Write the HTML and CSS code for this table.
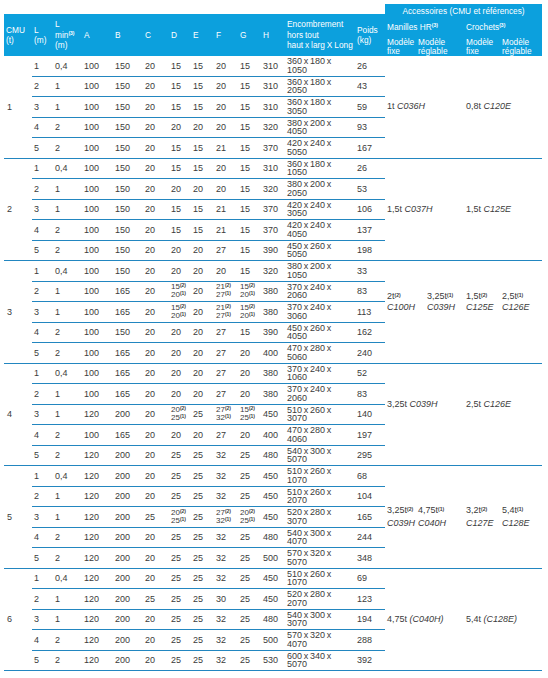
FILE: index.html
```html
<!DOCTYPE html>
<html lang="fr">
<head>
<meta charset="utf-8">
<title>Tableau</title>
<link rel="stylesheet" href="styles.css">
</head>
<body>
<table class="t">
<colgroup>
<col class="c28"><col class="c21"><col class="c29"><col class="c31"><col class="c30"><col class="c26"><col class="c22"><col class="c23"><col class="c24"><col class="c23"><col class="c24"><col class="c70"><col class="c30"><col class="c31"><col class="c48"><col class="c36"><col class="c42">
</colgroup>
<thead>
<tr class="h1">
<th class="hl" rowspan="3">CMU<br>(t)</th>
<th class="hl" rowspan="3">L<br>(m)</th>
<th class="hl" rowspan="3">L<br>min<sup class="s">(3)</sup><br>(m)</th>
<th class="hl" rowspan="3">A</th>
<th class="hl" rowspan="3">B</th>
<th class="hl" rowspan="3">C</th>
<th class="hl" rowspan="3">D</th>
<th class="hl" rowspan="3">E</th>
<th class="hl" rowspan="3">F</th>
<th class="hl" rowspan="3">G</th>
<th class="hl" rowspan="3">H</th>
<th class="hl nw" rowspan="3">Encombrement<br>hors tout<br>haut x larg X Long</th>
<th class="hl" rowspan="3">Poids<br>(kg)</th>
<th class="ha" colspan="4">Accessoires (CMU et références)</th>
</tr>
<tr class="h2">
<th class="hs" colspan="2">Manilles HR<sup class="s">(3)</sup></th>
<th class="hs" colspan="2">Crochets<sup class="s">(3)</sup></th>
</tr>
<tr class="h3">
<th class="hm">Modèle fixe</th>
<th class="hm">Modèle réglable</th>
<th class="hm">Modèle fixe</th>
<th class="hm">Modèle réglable</th>
</tr>
</thead>
<tbody>
<!-- group 1 -->
<tr><td class="cmu" rowspan="5">1</td><td>1</td><td>0,4</td><td>100</td><td>150</td><td>20</td><td>15</td><td>15</td><td>20</td><td>15</td><td>310</td><td class="dim">360 x 180 x<br>1050</td><td>26</td>
<td class="acc" rowspan="5" colspan="2">1t <i>C036H</i></td><td class="acc" rowspan="5" colspan="2">0,8t <i>C120E</i></td></tr>
<tr><td>2</td><td>1</td><td>100</td><td>150</td><td>20</td><td>15</td><td>15</td><td>20</td><td>15</td><td>310</td><td class="dim">360 x 180 x<br>2050</td><td>43</td></tr>
<tr><td>3</td><td>1</td><td>100</td><td>150</td><td>20</td><td>15</td><td>15</td><td>20</td><td>15</td><td>310</td><td class="dim">360 x 180 x<br>3050</td><td>59</td></tr>
<tr><td>4</td><td>2</td><td>100</td><td>150</td><td>20</td><td>20</td><td>20</td><td>20</td><td>15</td><td>320</td><td class="dim">380 x 200 x<br>4050</td><td>93</td></tr>
<tr><td>5</td><td>2</td><td>100</td><td>150</td><td>20</td><td>15</td><td>15</td><td>21</td><td>15</td><td>370</td><td class="dim">420 x 240 x<br>5050</td><td>167</td></tr>
<!-- group 2 -->
<tr><td class="cmu" rowspan="5">2</td><td>1</td><td>0,4</td><td>100</td><td>150</td><td>20</td><td>15</td><td>15</td><td>20</td><td>15</td><td>310</td><td class="dim">360 x 180 x<br>1050</td><td>26</td>
<td class="acc" rowspan="5" colspan="2">1,5t <i>C037H</i></td><td class="acc" rowspan="5" colspan="2">1,5t <i>C125E</i></td></tr>
<tr><td>2</td><td>1</td><td>100</td><td>150</td><td>20</td><td>20</td><td>20</td><td>20</td><td>15</td><td>320</td><td class="dim">380 x 200 x<br>2050</td><td>53</td></tr>
<tr><td>3</td><td>1</td><td>100</td><td>150</td><td>20</td><td>15</td><td>15</td><td>21</td><td>15</td><td>370</td><td class="dim">420 x 240 x<br>3050</td><td>106</td></tr>
<tr><td>4</td><td>2</td><td>100</td><td>150</td><td>20</td><td>15</td><td>15</td><td>21</td><td>15</td><td>370</td><td class="dim">420 x 240 x<br>4050</td><td>137</td></tr>
<tr><td>5</td><td>2</td><td>100</td><td>150</td><td>20</td><td>20</td><td>20</td><td>27</td><td>15</td><td>390</td><td class="dim">450 x 260 x<br>5050</td><td>198</td></tr>
<!-- group 3 -->
<tr><td class="cmu" rowspan="5">3</td><td>1</td><td>0,4</td><td>100</td><td>150</td><td>20</td><td>20</td><td>20</td><td>20</td><td>15</td><td>320</td><td class="dim">380 x 200 x<br>1050</td><td>33</td>
<td class="acc a3 nb" rowspan="4">2t<sup class="s">(2)</sup><br><i>C100H</i></td><td class="acc a3 nb pad" rowspan="4">3,25t<sup class="s">(1)</sup><br><i>C039H</i></td><td class="acc a3 nb" rowspan="4">1,5t<sup class="s">(2)</sup><br><i>C125E</i></td><td class="acc a3 nb" rowspan="4">2,5t<sup class="s">(1)</sup><br><i>C126E</i></td></tr>
<tr><td>2</td><td>1</td><td>100</td><td>165</td><td>20</td><td class="two">15<sup class="s">(2)</sup><br>20<sup class="s">(1)</sup></td><td>20</td><td class="two">21<sup class="s">(2)</sup><br>27<sup class="s">(1)</sup></td><td class="two">15<sup class="s">(2)</sup><br>20<sup class="s">(1)</sup></td><td>380</td><td class="dim">370 x 240 x<br>2060</td><td>83</td></tr>
<tr><td>3</td><td>1</td><td>100</td><td>165</td><td>20</td><td class="two">15<sup class="s">(2)</sup><br>20<sup class="s">(1)</sup></td><td>20</td><td class="two">21<sup class="s">(2)</sup><br>27<sup class="s">(1)</sup></td><td class="two">15<sup class="s">(2)</sup><br>20<sup class="s">(1)</sup></td><td>380</td><td class="dim">370 x 240 x<br>3060</td><td>113</td></tr>
<tr><td>4</td><td>2</td><td>100</td><td>150</td><td>20</td><td>20</td><td>20</td><td>27</td><td>15</td><td>390</td><td class="dim">450 x 260 x<br>4050</td><td>162</td></tr>
<tr><td>5</td><td>2</td><td>100</td><td>165</td><td>20</td><td>20</td><td>20</td><td>27</td><td>20</td><td>400</td><td class="dim">470 x 280 x<br>5060</td><td>240</td><td colspan="4"></td></tr>
<!-- group 4 -->
<tr><td class="cmu" rowspan="5">4</td><td>1</td><td>0,4</td><td>100</td><td>165</td><td>20</td><td>20</td><td>20</td><td>27</td><td>20</td><td>380</td><td class="dim">370 x 240 x<br>1060</td><td>52</td>
<td class="acc nb" rowspan="4" colspan="2">3,25t <i>C039H</i></td><td class="acc nb" rowspan="4" colspan="2">2,5t <i>C126E</i></td></tr>
<tr><td>2</td><td>1</td><td>100</td><td>165</td><td>20</td><td>20</td><td>20</td><td>27</td><td>20</td><td>380</td><td class="dim">370 x 240 x<br>2060</td><td>83</td></tr>
<tr><td>3</td><td>1</td><td>120</td><td>200</td><td>20</td><td class="two">20<sup class="s">(2)</sup><br>25<sup class="s">(1)</sup></td><td>25</td><td class="two">27<sup class="s">(2)</sup><br>32<sup class="s">(1)</sup></td><td class="two">15<sup class="s">(2)</sup><br>25<sup class="s">(1)</sup></td><td>450</td><td class="dim">510 x 260 x<br>3070</td><td>140</td></tr>
<tr><td>4</td><td>2</td><td>100</td><td>165</td><td>20</td><td>20</td><td>20</td><td>27</td><td>20</td><td>400</td><td class="dim">470 x 280 x<br>4060</td><td>197</td></tr>
<tr><td>5</td><td>2</td><td>120</td><td>200</td><td>20</td><td>25</td><td>25</td><td>32</td><td>25</td><td>480</td><td class="dim">540 x 300 x<br>5070</td><td>295</td><td colspan="4"></td></tr>
<!-- group 5 -->
<tr><td class="cmu" rowspan="5">5</td><td>1</td><td>0,4</td><td>120</td><td>200</td><td>20</td><td>25</td><td>25</td><td>32</td><td>25</td><td>450</td><td class="dim">510 x 260 x<br>1070</td><td>68</td>
<td class="acc a5" rowspan="5">3,25t<sup class="s">(2)</sup><br><i>C039H</i></td><td class="acc a5" rowspan="5">4,75t<sup class="s">(1)</sup><br><i>C040H</i></td><td class="acc a5" rowspan="5">3,2t<sup class="s">(2)</sup><br><i>C127E</i></td><td class="acc a5" rowspan="5">5,4t<sup class="s">(1)</sup><br><i>C128E</i></td></tr>
<tr><td>2</td><td>1</td><td>120</td><td>200</td><td>20</td><td>25</td><td>25</td><td>32</td><td>25</td><td>450</td><td class="dim">510 x 260 x<br>2070</td><td>104</td></tr>
<tr><td>3</td><td>1</td><td>120</td><td>200</td><td>25</td><td class="two">20<sup class="s">(2)</sup><br>25<sup class="s">(1)</sup></td><td>25</td><td class="two">27<sup class="s">(2)</sup><br>32<sup class="s">(1)</sup></td><td class="two">20<sup class="s">(2)</sup><br>25<sup class="s">(1)</sup></td><td>450</td><td class="dim">520 x 280 x<br>3070</td><td>165</td></tr>
<tr><td>4</td><td>2</td><td>120</td><td>200</td><td>20</td><td>25</td><td>25</td><td>32</td><td>25</td><td>480</td><td class="dim">540 x 300 x<br>4070</td><td>244</td></tr>
<tr><td>5</td><td>2</td><td>120</td><td>200</td><td>20</td><td>25</td><td>25</td><td>32</td><td>25</td><td>500</td><td class="dim">570 x 320 x<br>5070</td><td>348</td></tr>
<!-- group 6 -->
<tr><td class="cmu" rowspan="5">6</td><td>1</td><td>0,4</td><td>120</td><td>200</td><td>20</td><td>25</td><td>25</td><td>32</td><td>25</td><td>450</td><td class="dim">510 x 260 x<br>1070</td><td>69</td>
<td class="acc" rowspan="5" colspan="2">4,75t <i>(C040H)</i></td><td class="acc" rowspan="5" colspan="2">5,4t <i>(C128E)</i></td></tr>
<tr><td>2</td><td>1</td><td>120</td><td>200</td><td>25</td><td>25</td><td>25</td><td>30</td><td>25</td><td>450</td><td class="dim">520 x 280 x<br>2070</td><td>123</td></tr>
<tr><td>3</td><td>1</td><td>120</td><td>200</td><td>20</td><td>25</td><td>25</td><td>32</td><td>25</td><td>480</td><td class="dim">540 x 300 x<br>3070</td><td>194</td></tr>
<tr><td>4</td><td>2</td><td>120</td><td>200</td><td>20</td><td>25</td><td>25</td><td>32</td><td>25</td><td>500</td><td class="dim">570 x 320 x<br>4070</td><td>288</td></tr>
<tr><td>5</td><td>2</td><td>120</td><td>200</td><td>20</td><td>25</td><td>25</td><td>32</td><td>25</td><td>530</td><td class="dim">600 x 340 x<br>5070</td><td>392</td></tr>
</tbody>
</table>
</body>
</html>
```
FILE: styles.css
```css
html, body {
  margin: 0;
  padding: 0;
  background: #ffffff;
}
body {
  padding: 4px 0 0 4px;
  font-family: "Liberation Sans", Arial, sans-serif;
  color: #3b3b3b;
}
.t {
  table-layout: fixed;
  width: 538px;
  border-collapse: separate;
  border-spacing: 0;
  font-size: 9px;
}
.c21 { width: 21px; }
.c22 { width: 22px; }
.c23 { width: 23px; }
.c24 { width: 24px; }
.c26 { width: 26px; }
.c28 { width: 28px; }
.c29 { width: 29px; }
.c30 { width: 30px; }
.c31 { width: 31px; }
.c36 { width: 36px; }
.c42 { width: 42px; }
.c48 { width: 48px; }
.c70 { width: 70px; }

th {
  background: #0ca0dd;
  color: #ffffff;
  font-weight: normal;
  font-size: 8.3px;
  text-align: left;
  padding: 0 2px;
  line-height: 10.5px;
  vertical-align: middle;
}
th.hl {
  border-top: 10px solid #ffffff;
}
th.nw {
  white-space: nowrap;
  word-spacing: -0.4px;
}
th.ha {
  text-align: center;
  line-height: 10px;
}
.h1 { height: 14px; }
.h2 { height: 18px; }
.h3 { height: 19.5px; }
th.hm {
  line-height: 9px;
  padding-top: 2px;
}

tbody tr { height: 20.5px; }
td {
  padding: 0 2px;
  line-height: 10px;
  vertical-align: middle;
  border-bottom: 1px solid #2286c0;
  white-space: nowrap;
}
td.dim {
  line-height: 8.5px;
  word-spacing: -0.8px;
}
td.two {
  font-size: 8px;
  line-height: 8px;
}
td.cmu {
  padding-left: 3px;
}
td.acc {
  line-height: 11px;
}
td.a5 {
  line-height: 13px;
}
td.nb {
  border-bottom: 0;
}
td.pad {
  padding-left: 11px;
}
.s {
  font-size: 5px;
  font-weight: bold;
  line-height: 0;
  vertical-align: 2px;
}
th .s {
  vertical-align: 3px;
}
```
